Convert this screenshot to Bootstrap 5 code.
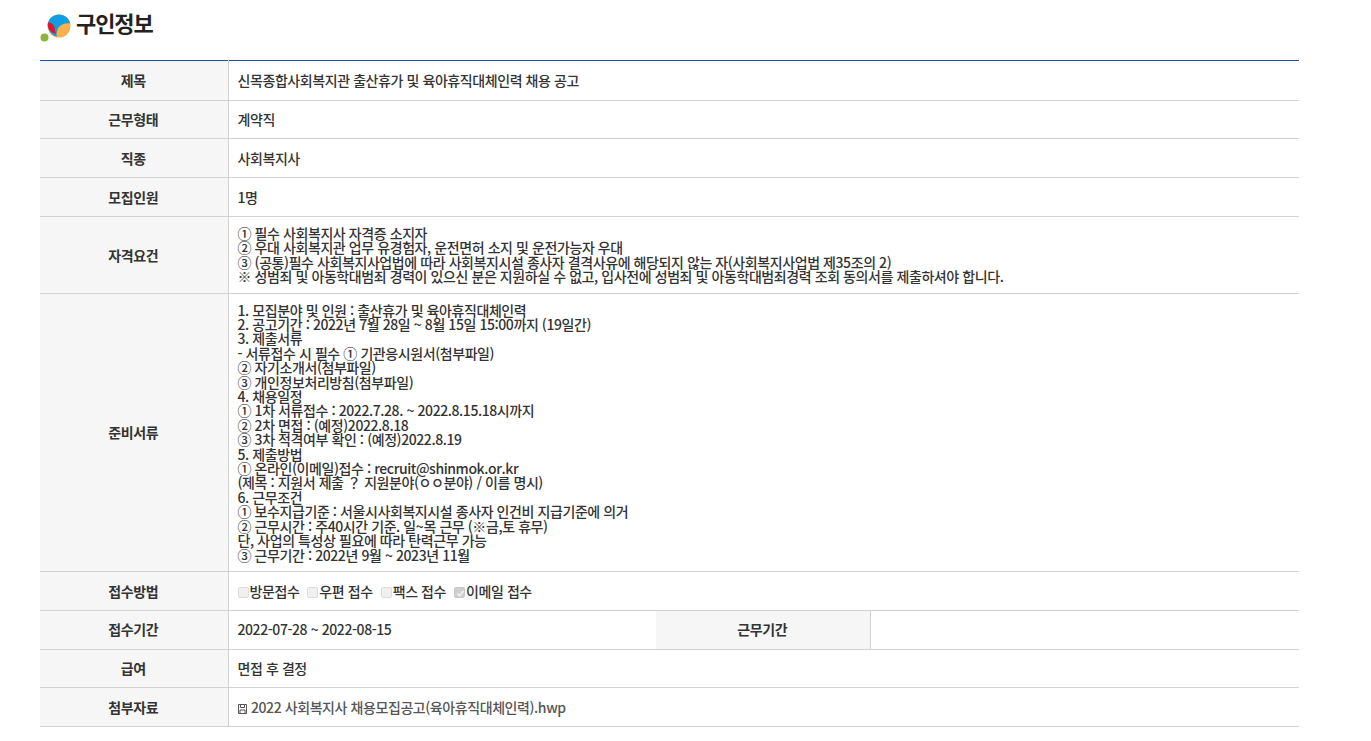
<!DOCTYPE html>
<html lang="ko">
<head>
<meta charset="utf-8">
<title>구인정보</title>
<link href="https://cdn.jsdelivr.net/npm/bootstrap@5.3.0/dist/css/bootstrap.min.css" rel="stylesheet">
<style>
body{background:#fff;font-family:"Noto Sans CJK KR","Noto Sans",sans-serif;color:#333;overflow:hidden}
.page-wrap{padding:0 72px 0 40px}
.head-row{height:60px;padding-top:8px}
.head-title{font-size:22px;font-weight:700;color:#222;letter-spacing:-1.1px;line-height:32px;margin:-2px 0 0 4px}
.job-table{table-layout:fixed;width:100%;margin:0;border-collapse:collapse;border-top:1px solid #1b4f9c;font-size:14px;font-weight:500;letter-spacing:-.42px;color:#333}
.job-table th,.job-table td{border-bottom:1px solid #d2d2d2;padding:0 10px 0 9px;vertical-align:middle;height:38.8px;line-height:14.4px}
.job-table th{background:#f6f6f6;text-align:center;font-weight:700;border-right:1px solid #d2d2d2;color:#333}
.job-table tr:first-child th,.job-table tr:first-child td{height:39.6px}
.job-table td.multi{padding:9px 10px 9px 9px}
.col-label{width:188px}
.col-b{width:428px}
.col-c{width:214px}
.opt-box{display:inline-block;width:11px;height:11px;background:#f0f0f0;border:1px solid #dcdcdc;border-radius:2px;vertical-align:-1px;margin-right:1px}
.opt-box.on{background:#cfcfcf;border-color:#c8c8c8;position:relative}
.opt-box.on svg{position:absolute;left:1px;top:1px}
.opt-item{margin-right:8px}
.file-link{color:#555;text-decoration:none}
.file-ico{vertical-align:-1px;margin-right:1px}
</style>
</head>
<body>
<div class="page-wrap">
  <div class="head-row d-flex align-items-start">
    <svg width="32" height="34" viewBox="0 0 32 34" class="flex-shrink-0" aria-hidden="true">
      <circle cx="4.5" cy="29.5" r="4" fill="#8db53b"/>
      <circle cx="19" cy="18" r="11.5" fill="#fbb04c"/>
      <path d="M8 15.5C9 10 13.500 6.500 19 6.500c5.500 0 10 3.500 11.200 9-4.500-1-9.500 1-12 4.500-1 2-2 5-1.500 8.500C11.500 27.500 7.500 22 8 15.500z" fill="#0f9fe0"/>
      <path d="M8.200 14.500c2.500 0 4.500 1 5.500 3 1 2 1.500 5 2 8.500-4.500-1-8-5-8-9.500 0-.7.200-1.400.500-2z" fill="#e3142d"/>
    </svg>
    <h2 class="head-title">구인정보</h2>
  </div>
  <table class="job-table">
    <colgroup><col class="col-label"><col class="col-b"><col class="col-c"><col></colgroup>
    <tbody>
      <tr><th>제목</th><td colspan="3">신목종합사회복지관 출산휴가 및 육아휴직대체인력 채용 공고</td></tr>
      <tr><th>근무형태</th><td colspan="3">계약직</td></tr>
      <tr><th>직종</th><td colspan="3">사회복지사</td></tr>
      <tr><th>모집인원</th><td colspan="3">1명</td></tr>
      <tr><th>자격요건</th><td colspan="3" class="multi">① 필수 사회복지사 자격증 소지자<br>② 우대 사회복지관 업무 유경험자, 운전면허 소지 및 운전가능자 우대<br>③ (공통)필수 사회복지사업법에 따라 사회복지시설 종사자 결격사유에 해당되지 않는 자(사회복지사업법 제35조의 2)<br>※ 성범죄 및 아동학대범죄 경력이 있으신 분은 지원하실 수 없고, 입사전에 성범죄 및 아동학대범죄경력 조회 동의서를 제출하셔야 합니다.</td></tr>
      <tr><th>준비서류</th><td colspan="3" class="multi">1. 모집분야 및 인원 : 출산휴가 및 육아휴직대체인력<br>2. 공고기간 : 2022년 7월 28일 ~ 8월 15일 15:00까지 (19일간)<br>3. 제출서류<br>- 서류접수 시 필수 ① 기관응시원서(첨부파일)<br>② 자기소개서(첨부파일)<br>③ 개인정보처리방침(첨부파일)<br>4. 채용일정<br>① 1차 서류접수 : 2022.7.28. ~ 2022.8.15.18시까지<br>② 2차 면접 : (예정)2022.8.18<br>③ 3차 적격여부 확인 : (예정)2022.8.19<br>5. 제출방법<br>① 온라인(이메일)접수 : recruit@shinmok.or.kr<br>(제목 : 지원서 제출 ？ 지원분야(ㅇㅇ분야) / 이름 명시)<br>6. 근무조건<br>① 보수지급기준 : 서울시사회복지시설 종사자 인건비 지급기준에 의거<br>② 근무시간 : 주40시간 기준. 일~목 근무 (※금,토 휴무)<br>단, 사업의 특성상 필요에 따라 탄력근무 가능<br>③ 근무기간 : 2022년 9월 ~ 2023년 11월</td></tr>
      <tr><th>접수방법</th><td colspan="3"><span class="opt-item"><span class="opt-box"></span>방문접수</span><span class="opt-item"><span class="opt-box"></span>우편 접수</span><span class="opt-item"><span class="opt-box"></span>팩스 접수</span><span><span class="opt-box on"><svg width="9" height="9" viewBox="0 0 9 9" class="d-block"><path d="M1.500 4.500l2 2.500 4-5" fill="none" stroke="#f4f4f4" stroke-width="1.400"/></svg></span>이메일 접수</span></td></tr>
      <tr><th>접수기간</th><td>2022-07-28 ~ 2022-08-15</td><th>근무기간</th><td></td></tr>
      <tr><th>급여</th><td colspan="3">면접 후 결정</td></tr>
      <tr><th>첨부자료</th><td colspan="3"><a href="#" class="file-link"><svg class="file-ico" width="9" height="10" viewBox="0 0 9 10" aria-hidden="true"><path d="M.5.500h8v9h-8zM2.500.500v3h4v-3M2 9.500v-3.500h5v3.500" fill="none" stroke="#555"/></svg> 2022 사회복지사 채용모집공고(육아휴직대체인력).hwp</a></td></tr>
    </tbody>
  </table>
</div>
</body>
</html>
